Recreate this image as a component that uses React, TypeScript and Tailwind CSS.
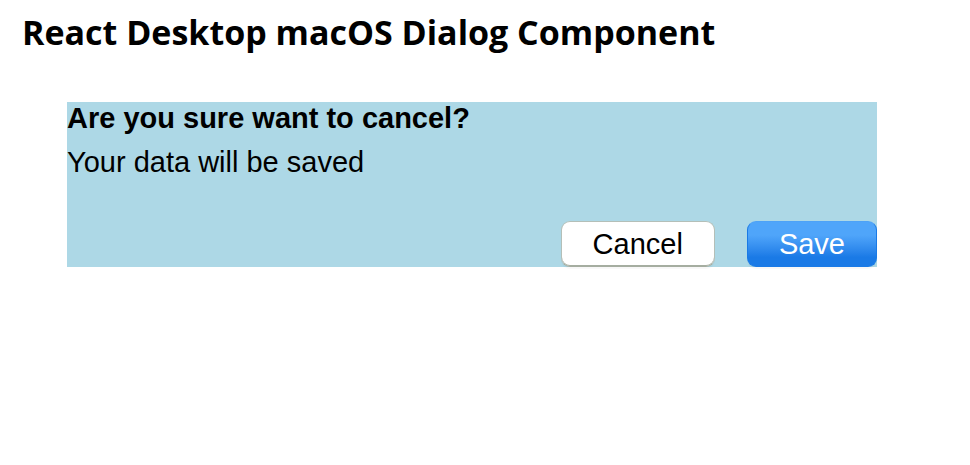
const buttonBase =
  "h-[46px] rounded-[9px] border px-[31px] pb-px text-[29px] leading-8";

export default function App() {
  return (
    <main className="min-h-screen bg-white px-[22px] pt-3 text-black">
      <h1 className="font-['Open_Sans','Noto_Sans',sans-serif] text-[34px] leading-10 font-bold">
        React Desktop macOS Dialog Component
      </h1>
      <section
        role="dialog"
        aria-labelledby="dialog-title"
        aria-describedby="dialog-message"
        className="mr-[71px] ml-[45px] mt-[50px] bg-[#add8e6] font-['Liberation_Sans',Arial,sans-serif]"
      >
        <h2 id="dialog-title" className="text-[29px] leading-8 font-bold">
          Are you sure want to cancel?
        </h2>
        <p id="dialog-message" className="mt-3 text-[29px] leading-8">
          Your data will be saved
        </p>
        <div className="mt-[43px] flex justify-end gap-8">
          <button
            type="button"
            className={`${buttonBase} border-[#b4bfb8] border-b-[#a5ada0] bg-white shadow-[inset_0_-1px_0_#a5ada0,0_2px_1px_rgba(0,0,0,0.03)]`}
          >
            Cancel
          </button>
          <button
            type="button"
            className={`${buttonBase} border-[#1a7ae6] border-t-[#4da2f7] bg-linear-to-b from-[#4fa5fa] from-30% to-[#1a7ae6] to-80% text-white shadow-[0_2px_1px_rgba(0,0,0,0.03)]`}
          >
            Save
          </button>
        </div>
      </section>
    </main>
  );
}
